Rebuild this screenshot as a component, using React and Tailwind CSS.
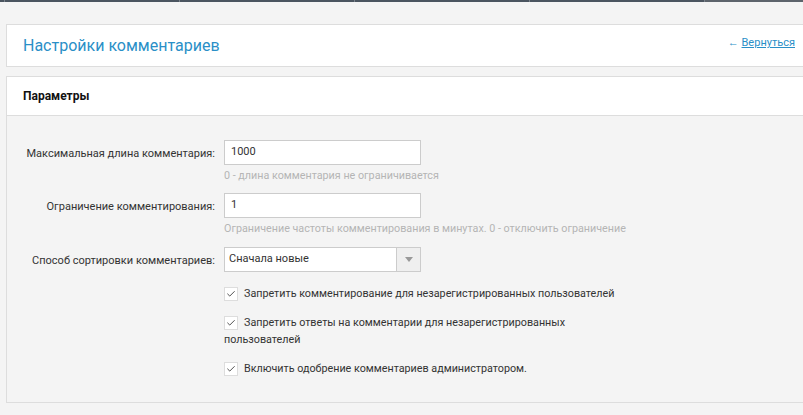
import { Check } from 'lucide-react';

function Field({ label, children, hint }) {
  return (
    <div className="flex items-start">
      <div className="w-[217px] shrink-0 pr-[9px] pt-[6px] text-right text-[11px] text-[#333]">{label}</div>
      <div>
        {children}
        {hint && <div className="mt-[4px] text-[10.75px] leading-[14px] text-[#b5b5b5]">{hint}</div>}
      </div>
    </div>
  );
}

function CheckRow({ children }) {
  return (
    <div className="ml-[217px] w-[400px] text-[10.75px] leading-[17px] text-[#333]">
      <span className="relative top-[2px] mr-[6px] inline-flex h-[14px] w-[14px] items-center justify-center border border-[#ddd] bg-white align-baseline">
        <Check className="h-[10px] w-[10px] text-[#444]" strokeWidth={2.25} />
      </span>
      {children}
    </div>
  );
}

export default function App() {
  return (
    <div className="min-h-[415px] bg-[#f4f4f4] font-['Roboto',sans-serif]">
      <div className="flex h-[2px] bg-[#4b5560]">
        <div className="h-full w-[5px] border-r border-[#7a828a]" />
        {[0, 1, 2, 3].map(i => (
          <div key={i} className="h-full w-[175px] border-r border-[#7a828a]" />
        ))}
        <div className="h-full flex-1 bg-[#5d646c]" />
      </div>
      <div className="pl-[6px] pt-[22px]">
        <div className="flex h-[43px] items-center justify-between border border-r-0 border-[#dddddd] bg-white pl-[16px] pr-[8px]">
          <h1 className="text-[16px] text-[#2a8fc7]">Настройки комментариев</h1>
          <a className="mt-[-4px] text-[11px] text-[#2a8fc7]">← <span className="underline">Вернуться</span></a>
        </div>
        <div className="mt-[9px] border border-r-0 border-[#dddddd]">
          <div className="flex h-[38px] items-center bg-white pl-[16px] text-[12px] font-bold text-[#111]">Параметры</div>
          <div className="flex h-[287px] flex-col border-t border-[#dddddd] pt-[24px]">
            <Field label="Максимальная длина комментария:" hint="0 - длина комментария не ограничивается">
              <div className="flex h-[25px] w-[197px] items-center border border-[#ccc] bg-white px-[6px] text-[11px] text-[#333]">1000</div>
            </Field>
            <div className="mt-[10px]">
              <Field label="Ограничение комментирования:" hint="Ограничение частоты комментирования в минутах. 0 - отключить ограничение">
                <div className="flex h-[25px] w-[197px] items-center border border-[#ccc] bg-white px-[6px] text-[11px] text-[#333]">1</div>
              </Field>
            </div>
            <div className="mt-[11px]">
              <Field label="Способ сортировки комментариев:">
                <div className="flex h-[25px] w-[197px] border border-[#ccc] bg-white text-[11px] text-[#333]">
                  <div className="flex flex-1 items-center px-[4px]">Сначала новые</div>
                  <div className="flex w-[24px] items-center justify-center border-l border-[#ccc] bg-[#efefef]">
                    <span className="h-0 w-0 border-x-[4px] border-t-[5px] border-x-transparent border-t-[#999]" />
                  </div>
                </div>
              </Field>
            </div>
            <div className="mt-[13px] flex flex-col gap-[12px]">
              <CheckRow>Запретить комментирование для незарегистрированных пользователей</CheckRow>
              <CheckRow>Запретить ответы на комментарии для незарегистрированных пользователей</CheckRow>
              <CheckRow>Включить одобрение комментариев администратором.</CheckRow>
            </div>
          </div>
        </div>
      </div>
    </div>
  );
}
